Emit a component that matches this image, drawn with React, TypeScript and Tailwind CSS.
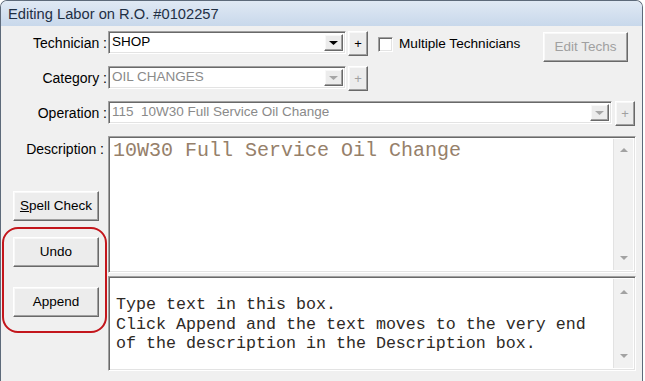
import React from 'react';

const ui = "font-['Liberation_Sans',Arial,sans-serif]";
const mono = "font-['Liberation_Mono','Courier_New',monospace]";

const raised =
  'border border-t-white border-l-white border-r-[#696969] border-b-[#696969] shadow-[inset_-1px_-1px_0_#a0a0a0,inset_1px_1px_0_#f8f8f8] bg-[#ececec]';
const sunken =
  'border border-t-[#a0a0a0] border-l-[#a0a0a0] border-r-white border-b-white shadow-[inset_1px_1px_0_#696969,inset_-1px_-1px_0_#e3e3e3] bg-white';

function Arrow({ up = false, color = '#000', w = 9, h = 5 }: { up?: boolean; color?: string; w?: number; h?: number }) {
  return (
    <svg width={w} height={h} viewBox={`0 0 ${w} ${h}`}>
      {up ? (
        <polygon points={`0,${h} ${w},${h} ${w / 2},0`} fill={color} />
      ) : (
        <polygon points={`0,0 ${w},0 ${w / 2},${h}`} fill={color} />
      )}
    </svg>
  );
}

function Label({ children }: { children: React.ReactNode }) {
  return (
    <div className="w-[107px] h-[24px] shrink-0 flex items-center justify-end pr-[1px] text-[14px] text-black whitespace-pre">
      {children}
    </div>
  );
}

function Combo({ width, text, disabled = false }: { width: string; text: string; disabled?: boolean }) {
  return (
    <div className={`${width} h-[23px] shrink-0 flex p-[2px] ${sunken}`}>
      <div
        className={`flex-1 flex items-center pl-[1px] text-[13.5px] whitespace-pre overflow-hidden ${
          disabled ? 'text-[#8a8a8a]' : 'text-black'
        }`}
      >
        {text}
      </div>
      <div className={`w-[19px] h-full flex items-center justify-center ${raised}`}>
        <Arrow color={disabled ? '#a6a6a6' : '#000'} w={9} h={4} />
      </div>
    </div>
  );
}

function Plus({ disabled = false, className = '' }: { disabled?: boolean; className?: string }) {
  return (
    <div
      className={`w-[20px] h-[25px] shrink-0 flex items-center justify-center text-[13px] leading-none ${raised} ${
        disabled ? 'text-[#a0a0a0]' : 'text-black'
      } ${className}`}
    >
      +
    </div>
  );
}

function Btn({ children, className = '' }: { children: React.ReactNode; className?: string }) {
  return (
    <div className={`w-[86px] h-[30px] flex items-center justify-center text-[13.5px] text-black ${raised} ${className}`}>
      {children}
    </div>
  );
}

function ScrollBar({ upPad, downPad }: { upPad: string; downPad: string }) {
  return (
    <div className="w-[20px] h-full flex flex-col justify-between bg-[#f1f1f1] border-l border-[#e2e2e2]">
      <div className={`flex justify-center ${upPad}`}>
        <Arrow up color="#a2a2a2" w={8} h={4} />
      </div>
      <div className={`flex justify-center ${downPad}`}>
        <Arrow color="#a2a2a2" w={8} h={4} />
      </div>
    </div>
  );
}

export default function App() {
  return (
    <div className={`w-[645px] h-[381px] bg-white ${ui}`}>
      <div className="w-[643px] h-[381px] flex flex-col border border-b-0 border-[#5d6a7a] rounded-t-[7px] overflow-hidden bg-[#f0f0f0]">
        {/* title bar */}
        <div className="h-[25px] shrink-0 flex items-center pl-[7px] pt-[1px] bg-gradient-to-b from-[#e0e9f4] to-[#c8d8eb] text-[14.7px] text-[#1f2f44]">
          Editing Labor on R.O. #0102257
        </div>

        <div className="flex-1 pt-[5px]">
          {/* Technician row */}
          <div className="flex items-start h-[35px]">
            <Label>Technician :</Label>
            <Combo width="w-[238px]" text="SHOP" />
            <Plus className="ml-[2px]" />
            <div className="h-[27px] flex items-center ml-[10px]">
              <div className={`w-[15px] h-[15px] ${sunken}`} />
              <span className="ml-[6px] text-[13.6px] text-black">Multiple Technicians</span>
            </div>
            <div className={`ml-auto mr-[14px] mt-[1px] w-[85px] h-[30px] flex items-center justify-center text-[13.5px] text-[#a0a0a0] ${raised}`}>
              Edit Techs
            </div>
          </div>

          {/* Category row */}
          <div className="flex items-start h-[35px]">
            <Label>Category :</Label>
            <Combo width="w-[238px]" text="OIL CHANGES" disabled />
            <Plus disabled className="ml-[2px]" />
          </div>

          {/* Operation row */}
          <div className="flex items-start h-[35px]">
            <Label>Operation :</Label>
            <Combo width="w-[504px]" text="115  10W30 Full Service Oil Change" disabled />
            <Plus disabled className="ml-[3px]" />
          </div>

          {/* Description area */}
          <div className="flex">
            <div className="relative w-[107px] shrink-0">
              <div className="pt-[5px] pr-[4px] text-right text-[14px] leading-[16px] text-black">Description :</div>
              <div className="pl-[12px] pt-[34px] flex flex-col">
                <Btn>
                  <span>
                    <span className="underline">S</span>pell Check
                  </span>
                </Btn>
                <Btn className="mt-[16px]">Undo</Btn>
                <Btn className="mt-[20px]">Append</Btn>
              </div>
              <div className="absolute left-[1px] top-[91px] w-[105px] h-[106px] border-2 border-[#c3161c] rounded-[16px] pointer-events-none" />
            </div>

            <div className="w-[528px] flex flex-col">
              <div className={`h-[137px] flex p-[2px] ${sunken}`}>
                <div className={`flex-1 px-[2px] pt-[1px] text-[20px] leading-[22px] text-[#96806a] whitespace-pre ${mono}`}>
                  10W30 Full Service Oil Change
                </div>
                <ScrollBar upPad="pt-[9px]" downPad="pb-[10px]" />
              </div>
              <div className={`h-[95px] mt-[3px] flex p-[2px] ${sunken}`}>
                <div className={`flex-1 pl-[5px] pt-[16px] text-[16.67px] leading-[19.5px] text-[#2e2a26] whitespace-pre ${mono}`}>
                  {'Type text in this box.\nClick Append and the text moves to the very end\nof the description in the Description box.'}
                </div>
                <ScrollBar upPad="pt-[11px]" downPad="pb-[10px]" />
              </div>
            </div>
          </div>
        </div>
      </div>
    </div>
  );
}
